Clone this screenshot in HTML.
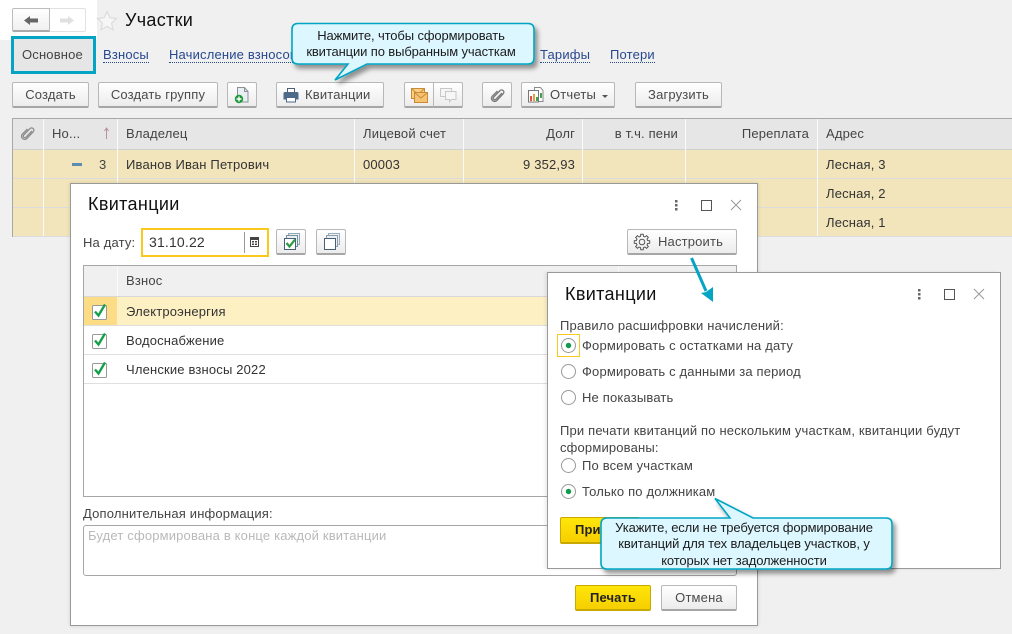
<!DOCTYPE html>
<html lang="ru"><head><meta charset="utf-8"><title>Участки</title>
<style>
html,body{margin:0;padding:0}
body{width:1012px;height:634px;position:relative;overflow:hidden;background:#f0f0f0;font-family:"Liberation Sans",Arial,sans-serif;font-size:13px;color:#444;letter-spacing:.17px}
.a{position:absolute;white-space:nowrap;line-height:16px}
.box{position:absolute;box-sizing:border-box}
.btn{position:absolute;box-sizing:border-box;border:1px solid #b8b8b8;border-bottom:2px solid #a6a6a6;border-radius:2px;background:linear-gradient(#fff,#ececec);color:#4a4a4a;text-align:center;line-height:23px;white-space:nowrap}
.y{background:linear-gradient(#ffe60a,#f6cf00);border-color:#c9a800;color:#222;font-weight:bold;letter-spacing:.1px}
.lnk{color:#27488f;border-bottom:1px dotted #27488f;line-height:15px}
.hd{background:#e6e6e6}
.ttl{font-size:18px;line-height:22px;color:#111;letter-spacing:.35px}
.t{position:absolute;white-space:nowrap;line-height:16px;letter-spacing:-.12px;color:#1c1c1c}
svg{position:absolute;overflow:visible}
</style></head><body>

<div class="box" style="left:0;top:0;width:97px;height:40px;background:#fff"></div>
<div class="box" style="left:12px;top:8px;width:38px;height:24px;border:1px solid #bcbcbc;border-bottom:2px solid #aaa;border-radius:2px 0 0 2px;background:linear-gradient(#fff,#f0f0f0)"></div>
<div class="box" style="left:50px;top:8px;width:36px;height:24px;border:1px solid #e2e2e2;border-left:0;border-radius:0 2px 2px 0;background:#fff"></div>
<svg style="left:0;top:0" width="130" height="40"><path d="M30 18.500h8v4h-8z" fill="#666"/><path d="M24 20.500l6-4.500v9z" fill="#666"/><path d="M60 18.500h8v4h-8z" fill="#e0e0e0"/><path d="M74 20.500l-6-4.500v9z" fill="#e0e0e0"/><path d="M107 11.500l2.900 6.200 6.700.8-5 4.600 1.400 6.700-6-3.400-6 3.400 1.400-6.700-5-4.600 6.700-.8z" fill="#f6f6f6" stroke="#dcdcdc" stroke-width="1.200"/></svg>
<div class="a ttl" style="left:125px;top:9px;letter-spacing:.3px">Участки</div>

<div class="box" style="left:11px;top:36px;width:85px;height:38px;border:3px solid #04a5c4;background:#e6e6e6"></div>
<div class="a" style="left:22px;top:47px;color:#444">Основное</div>
<div class="a lnk" style="left:103px;top:47px">Взносы</div>
<div class="a lnk" style="left:169px;top:47px">Начисление взносов</div>
<div class="a lnk" style="left:540px;top:47px">Тарифы</div>
<div class="a lnk" style="left:610px;top:47px">Потери</div>

<div class="btn" style="left:12px;top:82px;width:77px;height:26px">Создать</div>
<div class="btn" style="left:98px;top:82px;width:120px;height:26px">Создать группу</div>
<div class="btn" style="left:227px;top:82px;width:30px;height:26px"></div>
<svg style="left:227px;top:82px" width="30" height="26"><path d="M10.500 5.500h7l3.500 4v10.500H10.500z" fill="#e9f0f4" stroke="#8a9299"/><path d="M17.500 5.500v4h3.500" fill="none" stroke="#8a9299"/><circle cx="12" cy="17" r="4.200" fill="#1f9a3c"/><path d="M12 14.500v5M9.500 17h5" stroke="#fff" stroke-width="1.400"/></svg>
<div class="btn" style="left:276px;top:82px;width:108px;height:26px;text-align:left"><span style="margin-left:28px">Квитанции</span></div>
<svg style="left:276px;top:82px" width="30" height="26"><path d="M11.500 6.500h7v4h-7z" fill="#fff" stroke="#4d5f70"/><path d="M9 10h12a1.500 1.500 0 0 1 1.500 1.500v6H20v-2.500H10v2.500H7.500v-6A1.500 1.500 0 0 1 9 10z" fill="#4d6a88"/><path d="M10.500 15.500h9v4.500h-9z" fill="#fff" stroke="#4d6a88"/></svg>
<div class="btn" style="left:404px;top:82px;width:30px;height:26px;border-radius:2px 0 0 2px"></div>
<div class="btn" style="left:433px;top:82px;width:30px;height:26px;border-radius:0 2px 2px 0"></div>
<svg style="left:404px;top:82px" width="60" height="26"><rect x="7.500" y="6.500" width="13" height="10" fill="#f8cf85" stroke="#c98a32"/><path d="M7.500 6.500l6.500 6 6.500-6" fill="none" stroke="#c98a32"/><rect x="10.500" y="10.500" width="13" height="10" fill="#f6c274" stroke="#c98a32"/><path d="M10.500 10.500l6.500 5.500 6.500-5.500" fill="none" stroke="#c98a32"/><path d="M36.500 6.500h11v8h-11z" fill="#f6f6f6" stroke="#c8c8c8"/><path d="M41.500 9.500h10.500v8h-4.500l-2 2.500v-2.500h-4z" fill="#f6f6f6" stroke="#c8c8c8"/></svg>
<div class="btn" style="left:482px;top:82px;width:30px;height:26px"></div>
<svg style="left:490px;top:88px" width="15" height="15"><path d="M12 5L6 11.200C4.500 12.800 2.200 10.600 3.700 9L10 2.600C12.100.5 15.300 3.600 13.200 5.800L6.800 12.500C4 15.300-.4 11 2.300 8.200L7.500 3" fill="none" stroke="#7c7c7c" stroke-width="1.400"/></svg>
<div class="btn" style="left:521px;top:82px;width:94px;height:26px;text-align:left"><span style="margin-left:28px">Отчеты</span></div>
<svg style="left:521px;top:82px" width="94" height="26"><path d="M13.500 5.500h6l2.500 3v11h-8.500z" fill="#fff" stroke="#8a8a8a"/><path d="M7.500 8.500h10v11.500h-10z" fill="#fff" stroke="#777"/><path d="M9 14h2v5H9z" fill="#d9534f"/><path d="M12 12h2v7h-2z" fill="#e2a33a"/><path d="M15 15h2v4h-2z" fill="#3fa24c"/><path d="M19 11h2v5h-2z" fill="#3fa24c"/><path d="M81 13h6l-3 3z" fill="#555"/></svg>
<div class="btn" style="left:635px;top:82px;width:87px;height:26px">Загрузить</div>

<!-- main table -->
<div class="box" style="left:12px;top:118px;width:1000px;height:1px;background:#a8a8a8"></div>
<div class="box" style="left:12px;top:118px;width:1px;height:119px;background:#a8a8a8"></div>
<div class="box hd" style="left:13px;top:119px;width:999px;height:30px"></div>
<div class="box" style="left:13px;top:150px;width:999px;height:28px;background:#f2e5bb"></div>
<div class="box" style="left:13px;top:179px;width:999px;height:28px;background:#f2e5bb"></div>
<div class="box" style="left:13px;top:208px;width:999px;height:28px;background:#f2e5bb"></div>
<div class="box" style="left:13px;top:149px;width:999px;height:1px;background:#d0d0d0"></div>
<div class="box" style="left:13px;top:178px;width:999px;height:1px;background:#dcdcdc"></div>
<div class="box" style="left:13px;top:207px;width:999px;height:1px;background:#dcdcdc"></div>
<div class="box" style="left:13px;top:236px;width:999px;height:1px;background:#dcdcdc"></div>
<div class="box" style="left:43px;top:119px;width:1px;height:117px;background:#fafafa"></div>
<div class="box" style="left:117px;top:119px;width:1px;height:117px;background:#fafafa"></div>
<div class="box" style="left:354px;top:119px;width:1px;height:117px;background:#fafafa"></div>
<div class="box" style="left:463px;top:119px;width:1px;height:117px;background:#fafafa"></div>
<div class="box" style="left:582px;top:119px;width:1px;height:117px;background:#fafafa"></div>
<div class="box" style="left:685px;top:119px;width:1px;height:117px;background:#fafafa"></div>
<div class="box" style="left:817px;top:119px;width:1px;height:117px;background:#fafafa"></div>
<svg style="left:20px;top:126px" width="15" height="15"><path d="M12 5L6 11.200C4.500 12.800 2.200 10.600 3.700 9L10 2.600C12.100.5 15.300 3.600 13.200 5.800L6.800 12.500C4 15.300-.4 11 2.300 8.200L7.500 3" fill="none" stroke="#8c8c8c" stroke-width="1.300"/></svg>
<div class="a" style="left:52px;top:126px">Но...</div>
<svg style="left:100px;top:125px" width="14" height="18"><path d="M6.500 4v10" stroke="#bb8e9a"/><path d="M4.500 6l2-3 2 3" fill="none" stroke="#bb8e9a"/></svg>
<div class="a" style="left:126px;top:126px">Владелец</div>
<div class="a" style="left:363px;top:126px">Лицевой счет</div>
<div class="a" style="left:464px;top:126px;width:111px;text-align:right">Долг</div>
<div class="a" style="left:583px;top:126px;width:95px;text-align:right">в т.ч. пени</div>
<div class="a" style="left:686px;top:126px;width:123px;text-align:right">Переплата</div>
<div class="a" style="left:826px;top:126px">Адрес</div>
<div class="box" style="left:72px;top:163px;width:10px;height:3px;background:#5b8db0"></div>
<div class="a" style="left:99px;top:157px">3</div>
<div class="a" style="left:126px;top:157px;color:#333">Иванов Иван Петрович</div>
<div class="a" style="left:363px;top:157px;color:#333">00003</div>
<div class="a" style="left:464px;top:157px;width:111px;text-align:right;color:#333">9 352,93</div>
<div class="a" style="left:826px;top:157px;color:#333">Лесная, 3</div>
<div class="a" style="left:826px;top:186px;color:#333">Лесная, 2</div>
<div class="a" style="left:826px;top:215px;color:#333">Лесная, 1</div>

<!-- dialog 1 -->
<div class="box" style="left:70px;top:183px;width:688px;height:443px;background:#fff;border:1px solid #999;box-shadow:0 0 4px rgba(0,0,0,.12)"></div>
<div class="a ttl" style="left:88px;top:193px">Квитанции</div>
<svg style="left:668px;top:196px" width="80" height="18"><g fill="#666"><rect x="7" y="4" width="2.500" height="2.500"/><rect x="7" y="8" width="2.500" height="2.500"/><rect x="7" y="12" width="2.500" height="2.500"/></g><rect x="33.500" y="4.500" width="10" height="10" fill="none" stroke="#555"/><path d="M63 4l10 10M73 4L63 14" stroke="#999" fill="none"/></svg>
<div class="a" style="left:83px;top:235px">На дату:</div>
<div class="box" style="left:141px;top:228px;width:128px;height:29px;border:2px solid #fbc81e;background:#fff"></div>
<div class="a" style="left:149px;top:234px;font-size:14px;color:#333">31.10.22</div>
<div class="box" style="left:244px;top:232px;width:1px;height:21px;background:#999"></div>
<svg style="left:249px;top:235px" width="14" height="14"><rect x="1" y="2" width="9" height="10" fill="#444"/><rect x="2" y="5" width="7" height="6" fill="#fff"/><path d="M3 6h2v1.500H3zM6 6h2v1.500H6zM3 8.500h2V10H3zM6 8.500h2V10H6z" fill="#444"/></svg>
<div class="btn" style="left:276px;top:229px;width:30px;height:26px"></div>
<svg style="left:276px;top:229px" width="30" height="26"><path d="M12.500 4.500h11v11h-11z" fill="#eee" stroke="#8fa8b5"/><path d="M10.500 6.500h11v11h-11z" fill="#eee" stroke="#6f93a6"/><path d="M8.500 9.500h11v11h-11z" fill="#fff" stroke="#46607a"/><path d="M10.500 14l3 3.500 5.500-7" fill="none" stroke="#2b9a3d" stroke-width="2.200"/></svg>
<div class="btn" style="left:316px;top:229px;width:30px;height:26px"></div>
<svg style="left:316px;top:229px" width="30" height="26"><path d="M12.500 4.500h11v11h-11z" fill="#eee" stroke="#9ab0c0"/><path d="M10.500 6.500h11v11h-11z" fill="#eee" stroke="#8aa0b2"/><path d="M8.500 9.500h11v11h-11z" fill="#fff" stroke="#46607a"/></svg>
<div class="btn" style="left:627px;top:229px;width:110px;height:26px;padding-left:30px;text-align:left">Настроить</div>
<svg style="left:634px;top:233px" width="18" height="18"><g transform="translate(8,9)" fill="none" stroke="#555"><polygon points="5.600,-1.500 7.700,-1.220 7.700,1.220 5.600,1.500 5.020,2.900 6.310,4.580 4.580,6.310 2.900,5.020 1.500,5.600 1.220,7.700 -1.220,7.700 -1.500,5.600 -2.900,5.020 -4.580,6.310 -6.310,4.580 -5.020,2.900 -5.600,1.500 -7.700,1.220 -7.700,-1.220 -5.600,-1.500 -5.020,-2.900 -6.310,-4.580 -4.580,-6.310 -2.900,-5.020 -1.500,-5.600 -1.220,-7.700 1.220,-7.700 1.500,-5.600 2.900,-5.020 4.580,-6.310 6.310,-4.580 5.020,-2.900"/><circle r="2.800"/></g></svg>

<!-- inner table -->
<div class="box" style="left:83px;top:265px;width:654px;height:232px;border:1px solid #a6a6a6;background:#fff"></div>
<div class="box hd" style="left:84px;top:266px;width:652px;height:30px;background:#f0f0f0"></div>
<div class="box" style="left:117px;top:266px;width:1px;height:30px;background:#fafafa"></div>
<div class="box" style="left:618px;top:266px;width:1px;height:30px;background:#fafafa"></div>
<div class="a" style="left:126px;top:273px">Взнос</div>
<div class="box" style="left:84px;top:296px;width:652px;height:1px;background:#d8d8d8"></div>
<div class="box" style="left:84px;top:297px;width:652px;height:28px;background:#fdf1c4"></div>
<div class="box" style="left:84px;top:297px;width:33px;height:28px;background:#fcdc85"></div>
<div class="box" style="left:84px;top:325px;width:652px;height:1px;background:#dfdfdf"></div>
<div class="box" style="left:84px;top:354px;width:652px;height:1px;background:#dfdfdf"></div>
<div class="box" style="left:84px;top:383px;width:652px;height:1px;background:#dfdfdf"></div>
<svg style="left:91px;top:302px" width="22" height="80"><g fill="#fff" stroke="#9a9a9a"><rect x="1.500" y="3.500" width="14" height="14" rx="1"/><rect x="1.500" y="32.500" width="14" height="14" rx="1"/><rect x="1.500" y="61.500" width="14" height="14" rx="1"/></g><g fill="none" stroke="#14a04b" stroke-width="2.400"><path d="M4 9.500l3.500 4 6.500-11"/><path d="M4 38.500l3.500 4 6.500-11"/><path d="M4 67.500l3.500 4 6.500-11"/></g></svg>
<div class="a" style="left:126px;top:304px;color:#333">Электроэнергия</div>
<div class="a" style="left:126px;top:333px;color:#333">Водоснабжение</div>
<div class="a" style="left:126px;top:362px;color:#333">Членские взносы 2022</div>

<div class="a" style="left:83px;top:506px">Дополнительная информация:</div>
<div class="box" style="left:83px;top:525px;width:654px;height:51px;border:1px solid #a6a6a6;border-radius:3px;background:#fff"></div>
<div class="a" style="left:88px;top:528px;color:#b9b9b9">Будет сформирована в конце каждой квитанции</div>
<div class="btn y" style="left:575px;top:585px;width:76px;height:26px">Печать</div>
<div class="btn" style="left:661px;top:585px;width:76px;height:26px">Отмена</div>

<!-- dialog 2 -->
<div class="box" style="left:547px;top:272px;width:454px;height:297px;background:#fff;border:1px solid #999;box-shadow:-2px 0 3px rgba(0,0,0,.08)"></div>
<svg style="left:686px;top:255px" width="40" height="52"><path d="M5.500 3L20 36" stroke="#04a5c4" stroke-width="3" fill="none"/><path d="M27 47L15 38l5-1 7-5z" fill="#04a5c4"/></svg>
<div class="a ttl" style="left:565px;top:283px">Квитанции</div>
<svg style="left:911px;top:285px" width="80" height="18"><g fill="#666"><rect x="7" y="4" width="2.500" height="2.500"/><rect x="7" y="8" width="2.500" height="2.500"/><rect x="7" y="12" width="2.500" height="2.500"/></g><rect x="33.500" y="4.500" width="10" height="10" fill="none" stroke="#555"/><path d="M63 4l10 10M73 4L63 14" stroke="#999" fill="none"/></svg>
<div class="a" style="left:560px;top:318px">Правило расшифровки начислений:</div>
<div class="box" style="left:557px;top:334px;width:23px;height:23px;border:1px solid #fbc81e"></div>
<svg style="left:560px;top:336px" width="20" height="170" fill="#fff" stroke="#999"><circle cx="8.500" cy="9.500" r="7"/><circle cx="8.500" cy="35.500" r="7"/><circle cx="8.500" cy="61.500" r="7"/><circle cx="8.500" cy="129.500" r="7"/><circle cx="8.500" cy="155.500" r="7"/><circle cx="8.500" cy="9.500" r="2.700" fill="#109a4c" stroke="none"/><circle cx="8.500" cy="155.500" r="2.700" fill="#109a4c" stroke="none"/></svg>
<div class="a" style="left:582px;top:338px">Формировать с остатками на дату</div>
<div class="a" style="left:582px;top:364px">Формировать с данными за период</div>
<div class="a" style="left:582px;top:390px">Не показывать</div>
<div class="a" style="left:560px;top:423px">При печати квитанций по нескольким участкам, квитанции будут</div>
<div class="a" style="left:560px;top:440px">сформированы:</div>
<div class="a" style="left:582px;top:458px">По всем участкам</div>
<div class="a" style="left:582px;top:484px">Только по должникам</div>
<div class="btn y" style="left:560px;top:517px;width:80px;height:27px;text-align:left;padding-left:14px">Применить</div>

<!-- callouts -->
<svg style="left:0;top:0" width="1012" height="634">
<defs><filter id="s" x="-10%" y="-20%" width="125%" height="150%"><feDropShadow dx="3" dy="4" stdDeviation="2.500" flood-color="#000" flood-opacity=".4"/></filter></defs>
<path filter="url(#s)" d="M298 23.500H528q6 0 6 6V58q0 6-6 6H367L335 80l13-16H298q-6 0-6-6V29.500q0-6 6-6z" fill="#dcf7ff" stroke="#04a5c4" stroke-width="1.600"/>
<path filter="url(#s)" d="M607 518H730L715 498.500l38 19.500H886q6 0 6 6V563q0 6-6 6H607q-6 0-6-6V524q0-6 6-6z" fill="#dcf7ff" stroke="#04a5c4" stroke-width="1.600"/>
</svg>
<div class="t" style="left:292px;top:28px;width:238px;text-align:center">Нажмите, чтобы сформировать</div>
<div class="t" style="left:292px;top:44px;width:238px;text-align:center">квитанции по выбранным участкам</div>
<div class="t" style="left:601px;top:520px;width:286px;text-align:center">Укажите, если не требуется формирование</div>
<div class="t" style="left:601px;top:536px;width:286px;text-align:center">квитанций для тех владельцев участков, у</div>
<div class="t" style="left:601px;top:553px;width:286px;text-align:center">которых нет задолженности</div>
</body></html>
